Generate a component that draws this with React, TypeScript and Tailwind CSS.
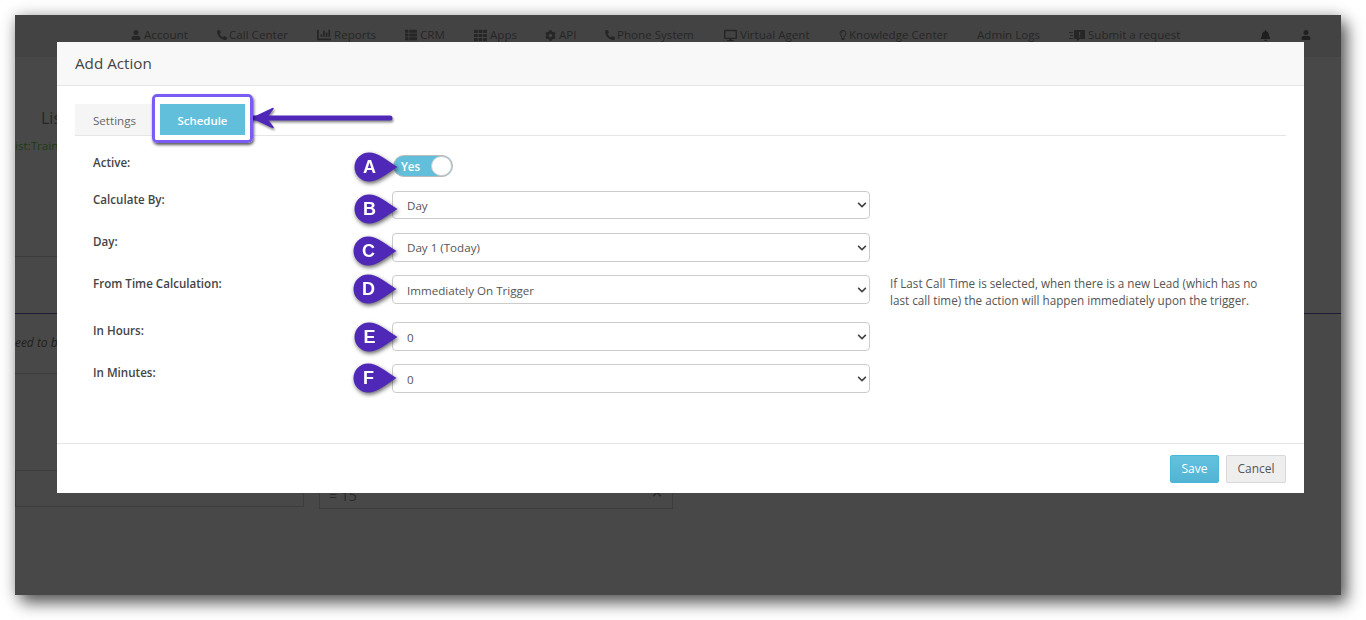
import React from "react";
import { FaUser, FaPhoneAlt, FaChartBar, FaThList, FaTh, FaCog, FaDesktop, FaRegLightbulb, FaBell, FaChevronUp, FaChevronDown } from "react-icons/fa";

function SubmitIcon() {
  return (
    <svg width="16" height="11" viewBox="0 0 16 11" fill="currentColor">
      <path d="M0 2h4v1H0zM1 5h3v1H1zM0 8h4v1H0z" />
      <path fillRule="evenodd" d="M5 0h11v9h-5l-3 2V9H5zM10 2v3.500h1.200V2zM10 6.300v1.200h1.200V6.300z" />
    </svg>
  );
}

const navItems: { label: string; icon: React.ReactNode; cls: string }[] = [
  { label: "Account", icon: <FaUser size={10} />, cls: "w-[58px] gap-[3px]" },
  { label: "Call Center", icon: <FaPhoneAlt size={10} />, cls: "w-[72px] gap-[2px]" },
  { label: "Reports", icon: <FaChartBar size={14} />, cls: "w-[60px] gap-[3px]" },
  { label: "CRM", icon: <FaThList size={12} />, cls: "w-[41px] gap-[3px]" },
  { label: "Apps", icon: <FaTh size={13} />, cls: "w-[43px] gap-[3px]" },
  { label: "API", icon: <FaCog size={11} />, cls: "w-[32px] gap-[3px]" },
  { label: "Phone System", icon: <FaPhoneAlt size={10} />, cls: "w-[91px] gap-[2px]" },
  { label: "Virtual Agent", icon: <FaDesktop size={13} />, cls: "w-[86px] gap-[3px]" },
  { label: "Knowledge Center", icon: <FaRegLightbulb size={10} />, cls: "w-[111px] gap-[1px]" },
  { label: "Admin Logs", icon: null, cls: "w-[64px]" },
  { label: "Submit a request", icon: <SubmitIcon />, cls: "w-[112px] gap-[3px]" },
];

function Pin({ letter, cls }: { letter: string; cls: string }) {
  return (
    <div className={`absolute w-[44px] h-[30px] drop-shadow-[1px_2px_2px_rgba(0,0,0,0.6)] ${cls}`}>
      <svg width="44" height="30" viewBox="0 0 44 30" className="block">
        <path d="M15 .5C24 .5 33 8.500 43.500 15 33 21.500 24 29.500 15 29.500A14.500 14.500 0 0 1 15 .5Z" fill="#4f28b8" />
      </svg>
      <span className="absolute left-0 top-0 w-[31px] h-[30px] flex items-center justify-center text-white font-bold text-[18px] font-['Liberation_Sans',sans-serif]">
        {letter}
      </span>
    </div>
  );
}

const rows = [
  { label: "Calculate By:", value: "Day", pin: "B", cls: "mt-[14px] h-[28px]", selCls: "pt-[1px]", pinCls: "left-[-38px] top-[3px]" },
  { label: "Day:", value: "Day 1 (Today)", pin: "C", cls: "mt-[14px] h-[29px]", selCls: "pt-[1px]", pinCls: "left-[-39px] top-[3px]" },
  { label: "From Time Calculation:", value: "Immediately On Trigger", pin: "D", cls: "mt-[13px] h-[29px]", selCls: "pt-[2px]", pinCls: "left-[-39px] top-[-1px]" },
  { label: "In Hours:", value: "0", pin: "E", cls: "mt-[18px] h-[29px]", selCls: "pt-[2px]", pinCls: "left-[-38px] top-0" },
  { label: "In Minutes:", value: "0", pin: "F", cls: "mt-[13px] h-[29px]", selCls: "pt-[2px]", pinCls: "left-[-39px] top-[-1px]" },
];

function Row({ r }: { r: (typeof rows)[number] }) {
  return (
    <div className={`flex ${r.cls}`}>
      <div className="w-[299px] shrink-0 text-[11.6px] leading-[18px] font-semibold text-[#444]">{r.label}</div>
      <div className="relative w-[478px] shrink-0 h-full">
        <select
          defaultValue={r.value}
          className={`appearance-none w-full h-full bg-white border border-[#ccc] rounded-[4px] pl-[14px] pr-[24px] text-[11.6px] text-[#555] outline-none ${r.selCls}`}
        >
          <option>{r.value}</option>
        </select>
        <FaChevronDown size={10} className="absolute right-[3px] top-1/2 -translate-y-1/2 text-[#444] pointer-events-none" />
        <Pin letter={r.pin} cls={r.pinCls} />
      </div>
      {r.pin === "D" && (
        <p className="ml-[20px] w-[380px] shrink-0 text-[11.7px] leading-[17px] text-[#555]">
          If Last Call Time is selected, when there is a new Lead (which has no last call time) the action will happen immediately upon the trigger.
        </p>
      )}
    </div>
  );
}

export default function App() {
  return (
    <div className="w-[1366px] h-[620px] bg-white pt-[15px] pl-[15px] overflow-hidden font-['Open_Sans',sans-serif]">
      <div className="relative w-[1326px] h-[580px] bg-[#484848] shadow-[6px_8px_15px_rgba(0,0,0,0.6),0_0_14px_rgba(0,0,0,0.22)]">
        <div className="h-full w-full overflow-hidden">
          {/* page behind the overlay */}
          <nav className="h-[42px] bg-[#434343] flex items-start pl-[116px] pt-[12px] text-[11.6px] leading-[16px] text-[#262626]">
            <div className="flex gap-[28px]">
              {navItems.map((n) => (
                <span key={n.label} className={`flex items-center whitespace-nowrap ${n.cls}`}>
                  {n.icon}
                  {n.label}
                </span>
              ))}
            </div>
            <FaBell size={11} className="ml-[79px] mt-[3px] text-[#1f1f1f]" />
            <FaUser size={10} className="ml-[30px] mt-[3px] text-[#1f1f1f]" />
          </nav>
          <div className="pt-[50px] pl-[26px] text-[16px] leading-[22px] text-[#262626]">List</div>
          <div className="mt-[9px] -ml-[6px] text-[11.6px] leading-[16px] text-[#1c3a16] whitespace-nowrap">List:Training</div>
          <div className="mt-[102px] h-px w-[600px] bg-[#3c3c3c]" />
          <div className="mt-[56px] h-px bg-[#201a33]" />
          <div className="mt-[21px] -ml-[7px] text-[12px] leading-[16px] italic text-[#1f1f1f] whitespace-nowrap">need to be</div>
          <div className="mt-[22px] h-px w-[600px] bg-[#3c3c3c]" />
          <div className="mt-[96px] flex items-start gap-[15px]">
            <div className="w-[289px] h-[37px] border border-[#3c3c3c]" />
            <div className="relative w-[354px] h-[39px] border border-[#3c3c3c] flex items-end justify-between pl-[9px] pr-[10px] pb-[3px] text-[14px] leading-[18px] text-[#2a2a2a]">
              <span>= 15</span>
              <FaChevronUp size={10} className="mb-[6px]" />
            </div>
          </div>
        </div>

        {/* modal */}
        <div className="absolute left-[42px] top-[27px] w-[1247px] h-[451px] bg-white flex flex-col">
          <header className="h-[44px] shrink-0 bg-[#f8f8f8] border-b border-[#e5e5e5] pl-[18px] pt-[10px] text-[15.2px] leading-[22px] text-[#444]">
            Add Action
          </header>
          <div className="flex-1 px-[18px] pt-[18px]">
            <div className="relative flex h-[32px] border-b border-[#e5e5e5]">
              <div className="w-[85px] bg-[#f5f5f5] pl-[18px] pt-[8px] text-[11.6px] leading-[18px] text-[#666]">Settings</div>
              <div className="relative w-[85px] h-[33px] bg-[#62bfdc] text-center pt-[8px] text-[11.4px] leading-[18px] font-semibold text-white z-10">
                Schedule
                <div className="absolute left-[-8px] top-[-10px] w-[101px] h-[49px] border-[3px] border-[#7a5cf5] rounded-[5px] shadow-[1px_2px_3px_rgba(0,0,0,0.65)] pointer-events-none">
                  <div className="absolute inset-0 border-[5px] border-white rounded-[2px]" />
                </div>
              </div>
              <svg width="144" height="24" viewBox="0 0 144 24" className="absolute left-[176px] top-[2px] drop-shadow-[1px_2px_1px_rgba(0,0,0,0.45)]">
                <path d="M3 12H139" stroke="#4f28b8" strokeWidth="5" strokeLinecap="round" fill="none" />
                <path d="M2 12 22 2.500 15 12 22 21.500Z" fill="#4f28b8" stroke="#4f28b8" strokeWidth="1.500" strokeLinejoin="round" />
              </svg>
            </div>
            <div className="pl-[18px]">
              <div className="flex mt-[19px] h-[22px]">
                <div className="w-[300px] shrink-0 -mt-[1px] text-[11.6px] leading-[18px] font-semibold text-[#444]">Active:</div>
                <div className="relative w-[60px] h-[22px] rounded-full bg-[#62bfdc] border border-[#bbb]">
                  <span className="absolute left-[7px] top-[2px] text-[11.6px] leading-[18px] font-semibold text-white">Yes</span>
                  <span className="absolute right-0 top-0 w-[21px] h-[20px] rounded-full bg-white border border-[#ccc]" />
                  <Pin letter="A" cls="left-[-40px] top-[-4px]" />
                </div>
              </div>
              {rows.map((r) => (
                <Row key={r.pin} r={r} />
              ))}
            </div>
          </div>
          <footer className="h-[50px] shrink-0 border-t border-[#e5e5e5] flex justify-end items-center gap-[7px] pr-[18px] pt-[1px]">
            <button className="w-[49px] h-[28px] rounded-[2px] bg-gradient-to-b from-[#64c2de] to-[#52b3d4] border border-[#46b8da] text-[12px] text-white">Save</button>
            <button className="w-[60px] h-[28px] rounded-[2px] bg-[#eeeeee] border border-[#d8d8d8] text-[12px] text-[#555]">Cancel</button>
          </footer>
        </div>
      </div>
    </div>
  );
}
